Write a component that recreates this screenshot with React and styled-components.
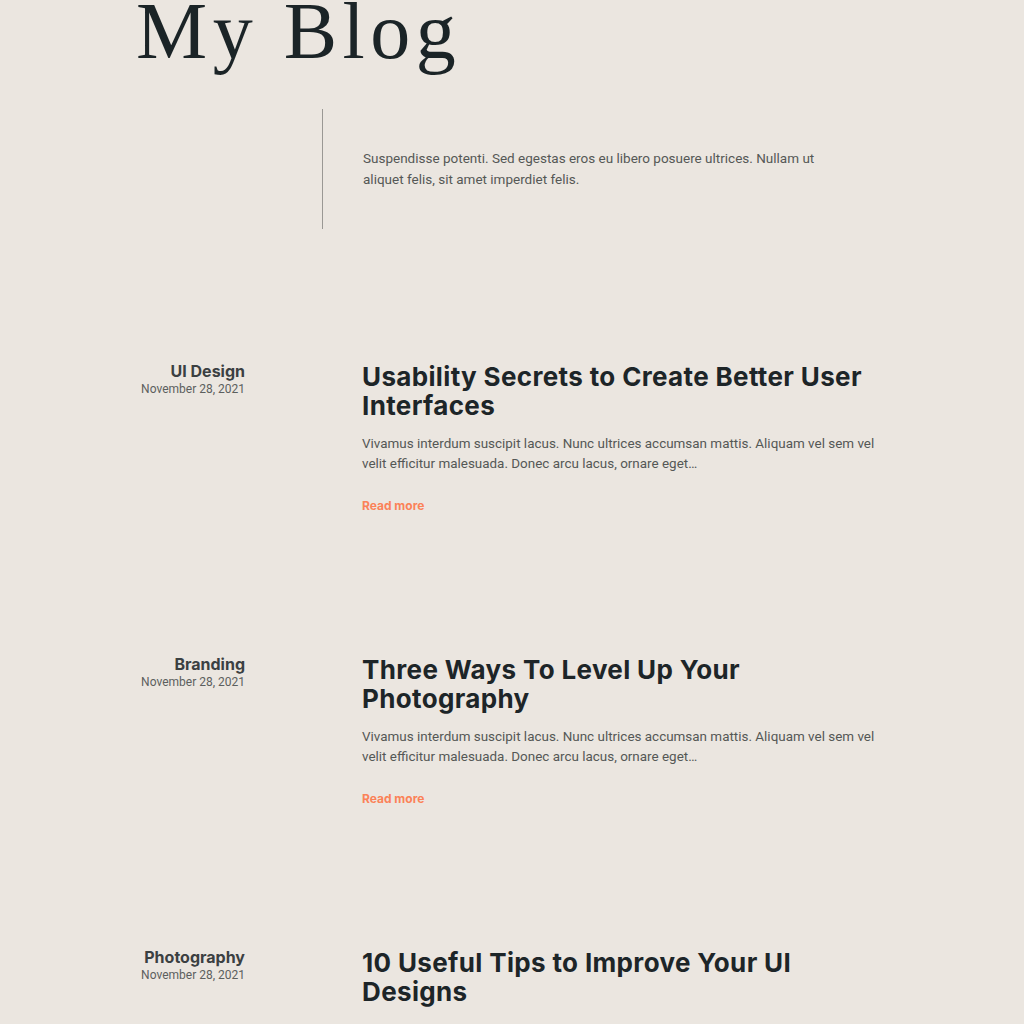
import React from "react";
import styled, { createGlobalStyle } from "styled-components";

const Global = createGlobalStyle`
  html, body { margin: 0; padding: 0; background: #ebe6e0; }
  body { font-family: Roboto, "Noto Sans", sans-serif; color: #1d2528; overflow: hidden; }
`;

const Page = styled.div`
  padding-left: 136px;
  width: 1024px;
  box-sizing: border-box;
`;

const Title = styled.h1`
  margin: -9px 0 0 0;
  font-family: "Liberation Serif", "Times New Roman", serif;
  font-weight: 400;
  font-size: 80px;
  line-height: 80px;
  letter-spacing: 5.5px;
  color: #1b2427;
`;

const Intro = styled.div`
  margin: 38px 0 0 186px;
  height: 120px;
  border-left: 1px solid #9a9894;
  padding-left: 40px;
  display: flex;
  align-items: center;
`;

const IntroText = styled.p`
  margin: 0;
  width: 470px;
  font-size: 13.5px;
  line-height: 21px;
  color: #555856;
`;

const Posts = styled.div`
  margin-top: 133px;
  display: flex;
  flex-direction: column;
`;

const Row = styled.article`
  display: grid;
  grid-template-columns: 109px 522px;
  column-gap: 117px;
  height: 293px;
`;

const Meta = styled.div`
  text-align: right;
  white-space: nowrap;
  display: flex;
  flex-direction: column;
  align-items: flex-end;
`;

const Category = styled.div`
  font-family: Inter, Roboto, sans-serif;
  font-size: 16px;
  font-weight: 700;
  line-height: 20px;
  color: #3b4042;
  margin-top: -1px;
`;

const DateText = styled.div`
  font-size: 12px;
  line-height: 16px;
  color: #5c5f5e;
`;

const PostTitle = styled.h2`
  margin: 0;
  font-family: Inter, Roboto, sans-serif;
  font-size: 26px;
  font-weight: 700;
  line-height: 29px;
  letter-spacing: 0.35px;
  color: #1d2528;
`;

const Excerpt = styled.p`
  margin: 14px 0 0 0;
  font-size: 13.45px;
  line-height: 20px;
  color: #555856;
`;

const ReadMore = styled.a`
  display: block;
  margin-top: 24px;
  font-family: Inter, Roboto, sans-serif;
  font-size: 12px;
  line-height: 16px;
  font-weight: 700;
  color: #fb8258;
  text-decoration: none;
`;

const posts = [
  { cat: "UI Design", title: "Usability Secrets to Create Better User Interfaces" },
  { cat: "Branding", title: "Three Ways To Level Up Your Photography" },
  { cat: "Photography", title: "10 Useful Tips to Improve Your UI Designs" },
];

const excerpt =
  "Vivamus interdum suscipit lacus. Nunc ultrices accumsan mattis. Aliquam vel sem vel velit efficitur malesuada. Donec arcu lacus, ornare eget…";

export default function App() {
  return (
    <>
      <Global />
      <Page>
        <Title>My Blog</Title>
        <Intro>
          <IntroText>
            Suspendisse potenti. Sed egestas eros eu libero posuere ultrices. Nullam ut aliquet felis, sit amet imperdiet felis.
          </IntroText>
        </Intro>
        <Posts>
          {posts.map((p) => (
            <Row key={p.cat}>
              <Meta>
                <Category>{p.cat}</Category>
                <DateText>November 28, 2021</DateText>
              </Meta>
              <div>
                <PostTitle>{p.title}</PostTitle>
                <Excerpt>{excerpt}</Excerpt>
                <ReadMore href="#">Read more</ReadMore>
              </div>
            </Row>
          ))}
        </Posts>
      </Page>
    </>
  );
}
